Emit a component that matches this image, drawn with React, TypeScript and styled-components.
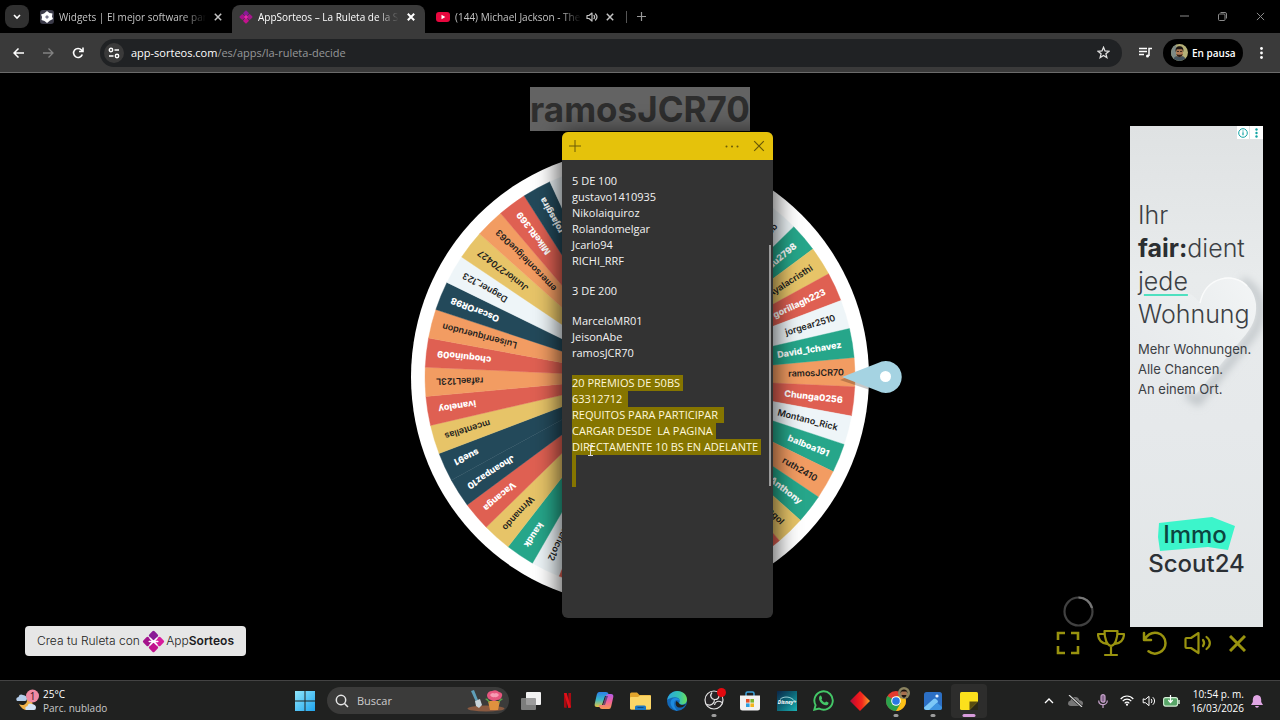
import React from "react";
import styled, { createGlobalStyle, css } from "styled-components";

const UI = `"Open Sans", "Noto Sans", sans-serif`;
const WEB = `Inter, "Liberation Sans", sans-serif`;

const Global = createGlobalStyle`
  *, *::before, *::after { box-sizing: border-box; }
  body { margin: 0; background: #000; font-family: ${UI}; font-size: 11px; color: #fff; }
  button { font: inherit; color: inherit; background: none; border: 0; padding: 0; cursor: pointer; }
  input { font: inherit; color: inherit; background: none; border: 0; padding: 0; min-width: 0; outline: 0; }
  a { color: inherit; text-decoration: none; }
  h1, h2, p { margin: 0; font-weight: inherit; font-size: inherit; }
  svg { display: block; flex: none; }
`;

const Screen = styled.div`
  display: flex;
  flex-direction: column;
  min-height: 100vh;
`;

/* ---------- browser chrome ---------- */

const TabStrip = styled.header`
  display: flex;
  align-items: stretch;
  height: 33px;
  padding: 0 5px;
  background: #000;
`;

const TabSearch = styled.button`
  display: grid;
  place-items: center;
  align-self: center;
  width: 24px;
  height: 23px;
  margin-right: 6px;
  border-radius: 8px;
  background: #303030;
`;

const Tab = styled.div<{ $active?: boolean; $width: number; $indent: number }>`
  position: relative;
  display: flex;
  align-items: center;
  width: ${(p) => p.$width}px;
  margin-top: 5px;
  padding: 0 7px 5px ${(p) => p.$indent}px;
  gap: 5px;
  color: ${(p) => (p.$active ? "#fff" : "#c4c4c4")};
  ${(p) =>
    p.$active &&
    css`
      background: #3a3a3a;
      border-radius: 8px 8px 0 0;
    `}
`;

const TabTitle = styled.span`
  flex: 1;
  min-width: 0;
  overflow: hidden;
  white-space: nowrap;
  font-size: 10px;
  line-height: 16px;
  mask-image: linear-gradient(to right, #000 84%, transparent);
`;

const IconButton = styled.button<{ $size?: number; $dim?: boolean }>`
  display: grid;
  place-items: center;
  flex: none;
  width: ${(p) => p.$size ?? 14}px;
  height: ${(p) => p.$size ?? 14}px;
  color: ${(p) => (p.$dim ? "#828282" : "inherit")};
`;

const TabDivider = styled.span`
  align-self: center;
  width: 1px;
  height: 12px;
  margin: 0 7px 0 2px;
  background: #555;
`;

const NewTab = styled(IconButton)`
  align-self: center;
  color: #999;
`;

const WindowButtons = styled.div`
  display: flex;
  align-items: center;
  gap: 24px;
  margin-left: auto;
  padding-right: 8px;
  color: #8a8a8a;
`;

const Toolbar = styled.nav`
  display: flex;
  align-items: center;
  height: 40px;
  padding: 0 12px 0 8px;
  background: #3a3a3a;
  border-bottom: 1px solid #6b6b6b;
`;

const NavButtons = styled.div`
  display: flex;
  gap: 10px;
  margin-right: 12px;
`;

const AddressBar = styled.form`
  display: flex;
  align-items: center;
  flex: 1;
  height: 28px;
  padding: 0 12px 0 4px;
  border-radius: 14px;
  background: #202224;
  line-height: 18px;
`;

const SiteInfo = styled.button`
  display: grid;
  place-items: center;
  width: 20px;
  height: 20px;
  margin-right: 7px;
  border-radius: 50%;
  background: #3a3a3a;
`;

const PathInput = styled.input`
  flex: 1;
  color: #969899;
`;

const MediaButton = styled(IconButton)`
  margin: 0 8px 0 13px;
`;

const Profile = styled.button`
  display: flex;
  align-items: center;
  gap: 4px;
  height: 28px;
  width: 80px;
  margin-right: 11px;
  padding: 0 8px;
  border-radius: 14px;
  background: #000;
  font-size: 10px;
  font-weight: 600;
  white-space: nowrap;
`;

/* ---------- page ---------- */

const Stage = styled.main`
  position: relative;
  display: grid;
  grid-template-columns: 1fr auto 1fr;
  flex: 1;
  font-family: ${WEB};
`;

const LeftSide = styled.div`
  display: flex;
  align-items: flex-end;
  padding: 0 0 24px 25px;
`;

const Credit = styled.a`
  display: flex;
  align-items: center;
  width: 221px;
  height: 30px;
  padding: 0 12px;
  justify-content: space-between;
  border-radius: 4px;
  background: #e6e6e6;
  color: #1c1c22;
  font-size: 12px;
  font-weight: 300;
  line-height: 16px;
  white-space: nowrap;
  b { font-weight: 600; }
`;

const Center = styled.section`
  display: flex;
  flex-direction: column;
  align-items: center;
  gap: 17px;
  padding-top: 14px;
`;

const Winner = styled.h1`
  && {
    font-size: 35px;
    font-weight: 700;
  }
  line-height: 44px;
  background: #636363;
  color: #2e2e2e;
`;

const RightSide = styled.aside`
  display: flex;
  flex-direction: column;
  align-items: flex-end;
  padding: 53px 17px 20px 0;
`;

const AdRow = styled.div`
  display: flex;
  align-items: flex-end;
  gap: 36px;
`;

const Ad = styled.a`
  position: relative;
  display: flex;
  flex-direction: column;
  width: 133px;
  height: 501px;
  padding: 73px 0 0 8px;
  background: linear-gradient(#dfe2e3, #e8ebec 30%, #e6e9eb 60%, #e2e6e7);
  color: #3c4044;
  white-space: nowrap;
`;

const AdArt = styled.svg`
  position: absolute;
  left: 0;
  top: 130px;
`;

const AdChoices = styled.span`
  position: absolute;
  right: 0;
  top: 0;
  display: flex;
  gap: 1px;
`;

const AdHeadline = styled.p`
  && {
    font-size: 25px;
    font-weight: 300;
  }
  position: relative;
  line-height: 33px;
  b { font-weight: 700; color: #2b2e31; }
  u { text-decoration-color: #4fe0c0; text-decoration-thickness: 2px; text-underline-offset: 4px; text-decoration-skip-ink: none; }
`;

const AdText = styled.p`
  && { font-size: 13px; }
  position: relative;
  margin-top: 8px;
  line-height: 20px;
`;

const AdLogo = styled.div`
  position: relative;
  margin: 121px 0 0 7px;
  width: 103px;
  font-size: 24px;
  font-weight: 500;
  line-height: 29px;
  text-align: center;
  color: #2b3035;
`;

const LogoShape = styled.svg`
  position: absolute;
  left: 13px;
  top: -3px;
`;

const LogoWord = styled.span<{ $inset?: boolean }>`
  position: relative;
  display: block;
  padding-right: ${(p) => (p.$inset ? 3 : 0)}px;
  color: ${(p) => (p.$inset ? "#0c4540" : "inherit")};
`;

const Controls = styled.div`
  display: flex;
  align-items: center;
  gap: 17px;
  padding: 2px 17px 0 0;
  color: #99930f;
`;

const ControlButton = styled.button`
  display: block;
`;

/* ---------- sticky note ---------- */

const Note = styled.section`
  position: absolute;
  left: calc(50% - 78px);
  top: 59px;
  width: 211px;
  height: 486px;
  border-radius: 6px;
  overflow: hidden;
  background: #333;
  font-family: ${UI};
`;

const NoteShadow = styled.div`
  position: absolute;
  left: calc(50% - 78px);
  top: 59px;
  width: 211px;
  height: 486px;
  border-radius: 6px;
  box-shadow: 0 4px 24px 3px rgba(0, 0, 0, 0.7);
`;

const NoteBar = styled.div`
  display: flex;
  align-items: center;
  gap: 13px;
  height: 28px;
  padding: 0 7px 0 6px;
  background: #e5c20b;
  color: #6a5a08;
`;

const Spacer = styled.span`
  flex: 1;
`;

const NoteBody = styled.div`
  display: flex;
  flex-direction: column;
  gap: 14px;
  padding: 13px 0 0 10px;
  line-height: 16px;
  color: #f2f2f2;
  white-space: pre;
`;

const NoteLine = styled.div`
  height: 16px;
`;

const Marked = styled.mark`
  display: inline-block;
  height: 16px;
  min-width: 4px;
  padding-right: 3px;
  background: #857500;
  color: #fff8dc;
`;

const NoteScroll = styled.span`
  position: absolute;
  right: 2px;
  top: 113px;
  width: 2px;
  height: 241px;
  background: #9b9b9b;
`;

const Caret = styled.svg`
  position: absolute;
  left: 25px;
  top: 313px;
`;

/* ---------- taskbar ---------- */

const Taskbar = styled.footer`
  display: grid;
  grid-template-columns: 1fr 700px 1fr;
  align-items: center;
  height: 40px;
  padding: 0 17px 0 11px;
  background: #202120;
  border-top: 1px solid #434343;
`;

const Weather = styled.button`
  display: flex;
  align-items: center;
  gap: 4px;
  padding-left: 5px;
  font-size: 10px;
  line-height: 14px;
  text-align: left;
  small { display: block; font-size: 10px; color: #c8c8c8; }
`;

const Dock = styled.div`
  display: flex;
  align-items: center;
  gap: 4px;
`;

const SearchBox = styled.label`
  display: flex;
  align-items: center;
  gap: 8px;
  width: 182px;
  height: 27px;
  padding: 0 4px 0 8px;
  border-radius: 14px;
  background: #3b3b3a;
  color: #ccc;
  input { flex: 1; }
`;

const Apps = styled.div`
  display: flex;
  flex: 1;
  justify-content: space-between;
`;

const AppButton = styled.button<{ $open?: boolean; $current?: boolean }>`
  position: relative;
  display: grid;
  place-items: center;
  width: 36px;
  height: 34px;
  border-radius: 4px;
  background: ${(p) => (p.$current ? "#2d2d2c" : "none")};
  &::after {
    content: "";
    position: absolute;
    bottom: 1px;
    left: 50%;
    width: ${(p) => (p.$current ? 13 : 5)}px;
    height: 3px;
    border-radius: 2px;
    transform: translateX(-50%);
    background: ${(p) => (p.$current ? "#d79bdc" : p.$open ? "#9c9c9c" : "transparent")};
  }
`;

const Tray = styled.div`
  display: flex;
  align-items: center;
  justify-content: flex-end;
`;

const TrayButton = styled.button<{ $wide?: boolean }>`
  display: grid;
  place-items: center;
  width: ${(p) => (p.$wide ? 27 : 22)}px;
  height: 24px;
`;

const Clock = styled.time`
  width: 62px;
  margin-right: 7px;
  font-size: 10px;
  line-height: 14px;
  text-align: right;
  white-space: nowrap;
`;

/* ---------- icons ---------- */

const Cross = ({ size = 8, w = 1.5 }: { size?: number; w?: number }) => (
  <svg width={size} height={size} viewBox="0 0 10 10" fill="none" stroke="currentColor" strokeWidth={w * (10 / size)}>
    <path d="M1 1l8 8M9 1l-8 8" />
  </svg>
);

const Diamond = ({ size, plain }: { size: number; plain?: boolean }) => (
  <svg width={size} height={size} viewBox="-12 -12 24 24">
    <g transform="rotate(45)">
      <rect x="-8.3" y="-8.3" width="7.8" height="7.8" rx="1.6" fill="#8a1a96" />
      <rect x="0.5" y="-8.3" width="7.8" height="7.8" rx="1.6" fill={plain ? "#a3188c" : "#d81b9b"} />
      <rect x="-8.3" y="0.5" width="7.8" height="7.8" rx="1.6" fill="#a5128c" />
      <rect x="0.5" y="0.5" width="7.8" height="7.8" rx="1.6" fill="#c2128d" />
    </g>
    {!plain && <path d="M-3.500-3.500L3.500 3.500M3.500-3.500L-3.500 3.500M-4.500 0H4.500" stroke="#fff" strokeWidth="1.500" strokeLinecap="round" />}
    {plain && <circle r="3" fill="#e42aa8" />}
  </svg>
);

const Avatar = ({ size }: { size: number }) => (
  <svg width={size} height={size} viewBox="0 0 16 16">
    <clipPath id={`av${size}`}><circle cx="8" cy="8" r="8" /></clipPath>
    <g clipPath={`url(#av${size})`}>
      <rect width="16" height="16" fill="#b5b077" />
      <rect width="5" height="16" fill="#7d8a86" />
      <path d="M2 16c0-4 3-5 6-5s6 1 6 5z" fill="#43525c" />
      <ellipse cx="8" cy="8" rx="3.200" ry="4.300" fill="#b07a55" />
      <path d="M4.500 7.500C3.600 3 6 2 8 2s4.400 1 3.500 5.500L10.500 5h-5z" fill="#1c1512" />
      <path d="M5 9.500c.8 3.600 5.200 3.600 6 0l-1.500.6h-3z" fill="#2a1c16" />
      <path d="M5.500 7h2M8.500 7h2" stroke="#1c1512" strokeWidth=".8" />
    </g>
  </svg>
);

const Speaker = ({ size, w = 1.5 }: { size: number; w?: number }) => (
  <svg width={size} height={size} viewBox="0 0 24 24" fill="none" stroke="currentColor" strokeWidth={(w * 24) / size} strokeLinecap="round" strokeLinejoin="round">
    <path d="M2 9v6h4l6 5V4L6 9zM16 9c1.500 1.800 1.500 4.200 0 6M19 6c3.500 3.500 3.500 8.500 0 12" />
  </svg>
);

const apps: { name: string; open?: boolean; current?: boolean; icon: React.ReactNode }[] = [
  {
    name: "Vista de tareas",
    icon: (
      <svg width="22" height="20" viewBox="0 0 22 20">
        <rect x="6" y="1" width="15" height="13" rx="1" fill="#f1f1f1" />
        <rect x="1" y="7" width="15" height="12" rx="1" fill="#8d8d8d" fillOpacity=".85" />
      </svg>
    ),
  },
  {
    name: "Netflix",
    icon: (
      <svg width="9" height="15" viewBox="0 0 10 17">
        <path d="M1 0h3v17l-3-.5zM6 0h3v16.500L6 17z" fill="#a90b12" />
        <path d="M1 0h3l5 16.500L6 17z" fill="#e01019" />
      </svg>
    ),
  },
  {
    name: "Copilot",
    icon: (
      <svg width="20" height="19" viewBox="0 0 20 19">
        <defs>
          <linearGradient id="cpA" x1="0" y1="0" x2="0" y2="1"><stop offset="0" stopColor="#2b7fe8" /><stop offset=".5" stopColor="#39b6c8" /><stop offset="1" stopColor="#e8c640" /></linearGradient>
          <linearGradient id="cpB" x1="0" y1="0" x2="0" y2="1"><stop offset="0" stopColor="#b45be8" /><stop offset=".5" stopColor="#f0629a" /><stop offset="1" stopColor="#f59a52" /></linearGradient>
        </defs>
        <path d="M5 1h7q2 0 2.600 2l.6 2H11L8 14q-.6 2-2.600 2H3Q0 16 .8 12.500l2-9Q3.400 1 5 1z" fill="url(#cpA)" />
        <path d="M15 18H8q-2 0-2.600-2L4.800 14H9l3-9q.6-2 2.600-2H17q3 0 2.200 3.500l-2 9Q16.600 18 15 18z" fill="url(#cpB)" />
        <path d="M9 14l3-9h2l-3 9z" fill="#20315f" fillOpacity=".6" />
      </svg>
    ),
  },
  {
    name: "Explorador de archivos",
    icon: (
      <svg width="21" height="18" viewBox="0 0 21 18">
        <path d="M0 2q0-1.500 1.500-1.500H7l2.500 2.500H20q1 0 1 1V16q0 1.500-1.500 1.500h-18Q0 17.500 0 16z" fill="#e2a52c" />
        <path d="M0 6q0-1 1-1h7l2-1.500h10q1 0 1 1V16q0 1.500-1.500 1.500h-18Q0 17.500 0 16z" fill="#fbd667" />
        <path d="M5 18v-3q0-1.500 1.500-1.500h8Q16 13.500 16 15v3z" fill="#1b77c4" />
        <path d="M7.500 15.500h6" stroke="#0d4d86" />
      </svg>
    ),
  },
  {
    name: "Microsoft Edge",
    icon: (
      <svg width="20" height="20" viewBox="0 0 20 20">
        <defs>
          <linearGradient id="edA" x1="0" y1="0" x2="1" y2="0"><stop offset="0" stopColor="#2aa6e0" /><stop offset=".6" stopColor="#35c3b0" /><stop offset="1" stopColor="#6be05a" /></linearGradient>
        </defs>
        <circle cx="10" cy="10" r="10" fill="#1367b5" />
        <path d="M.2 9C1 3.500 5.500 0 10.300 0 16 0 20 4 20 8.500c0 3-2.300 5-5 5-2.200 0-3.200-.8-3-1.500.8-1 1-1.700.8-2.700C12.300 7.500 10.500 6.300 8 6.300 4.500 6.300 1.500 8 .2 9z" fill="url(#edA)" />
        <path d="M8 7C4 7 3 11 4 14s4 5.500 6.500 6C8 17.500 6.500 14 7.300 11.500 7.600 10 8.500 9 9.800 9 12 9 12.700 10 12.500 11c1-2-1-4-4.500-4z" fill="#1d8ae0" />
        <path d="M12.200 12.200c.3 2 4.300 2.300 6.300.8.600 1-3 4-6.500 3.500S8 12 9.500 10z" fill="#202120" />
      </svg>
    ),
  },
  {
    name: "OBS Studio",
    open: true,
    icon: (
      <svg width="24" height="24" viewBox="0 2 24 24" overflow="visible">
        <circle cx="12" cy="13" r="9" fill="#262426" stroke="#e4e4e4" strokeWidth="1.200" />
        <path d="M10 5.500c-2.500 3-1 6.500 2.500 7M20 15.500c-3.500-2.500-7-1-7.500 2.500M5 17.500c3.500 1.500 7.500-.5 7.500-5M12.500 12.500c3 .2 4.500-1.500 4.500-4" fill="none" stroke="#e4e4e4" strokeWidth="1.200" />
        <circle cx="19.500" cy="5.500" r="4.500" fill="#e3090f" />
      </svg>
    ),
  },
  {
    name: "Microsoft Store",
    icon: (
      <svg width="20" height="20" viewBox="0 0 20 20">
        <path d="M6 5V2.500Q6 1 7.500 1h5Q14 1 14 2.500V5" fill="none" stroke="#3ba3dd" strokeWidth="1.500" />
        <path d="M0 4.500h20V17q0 2.500-2.500 2.500h-15Q0 19.500 0 17z" fill="#f2f2f2" />
        <path d="M6 8h3.600v3.600H6z" fill="#e4502b" /><path d="M10.400 8H14v3.600h-3.600z" fill="#7db52d" />
        <path d="M6 12.400h3.600V16H6z" fill="#2b9fe0" /><path d="M10.400 12.400H14V16h-3.600z" fill="#f3b41b" />
      </svg>
    ),
  },
  {
    name: "Disney+",
    icon: (
      <svg width="20" height="20" viewBox="0 0 20 20">
        <defs><linearGradient id="dis" x1="0" y1="0" x2="1" y2="1"><stop offset="0" stopColor="#0b2648" /><stop offset=".5" stopColor="#0d6878" /><stop offset="1" stopColor="#1bb2b4" /></linearGradient></defs>
        <rect width="20" height="20" fill="url(#dis)" />
        <path d="M3 8.500C6 5 14 5 17.500 10" fill="none" stroke="#bfeef0" strokeWidth=".8" />
        <text x="10" y="13" textAnchor="middle" fontSize="5" fontWeight="700" fontStyle="italic" fontFamily="Open Sans, sans-serif" fill="#fff">Disney+</text>
      </svg>
    ),
  },
  {
    name: "WhatsApp",
    icon: (
      <svg width="21" height="21" viewBox="0 0 21 21">
        <path d="M1.300 19.700l1.300-4.600A9.200 9.200 0 1 1 6 18.500z" fill="none" stroke="#44c767" strokeWidth="1.900" />
        <path d="M6.500 6.200c.6-.9 1.500-.8 1.800-.1l.8 1.800c.2.500-.8 1.300-.6 1.700.8 1.500 1.700 2.300 3.200 3 .5.200 1.100-1.200 1.600-1l2 1c.5.300.2 1.500-.5 2.100-2 1.500-5 0-6.800-1.900C6.200 11 5.400 8 6.500 6.200z" fill="#44c767" />
      </svg>
    ),
  },
  {
    name: "Juego",
    icon: (
      <svg width="20" height="20" viewBox="0 0 20 20">
        <defs><linearGradient id="rd"><stop offset="0" stopColor="#a90e3c" /><stop offset=".35" stopColor="#e8131f" /><stop offset=".6" stopColor="#f2281c" /><stop offset="1" stopColor="#f5a32b" /></linearGradient></defs>
        <path d="M10 0l10 10-10 10L0 10z" fill="url(#rd)" />
      </svg>
    ),
  },
  {
    name: "Google Chrome",
    open: true,
    icon: (
      <svg width="26" height="24" viewBox="-2 2 26 24" overflow="visible">
        <g transform="translate(11 14)">
          <circle r="10" fill="#e33b2e" />
          <path d="M0 0L-8.660-5A10 10 0 0 0 0 10L5 2.500z" fill="#2ba24c" />
          <path d="M0 10A10 10 0 0 0 8.660-5H0L4.500 2.500z" fill="#fbc116" />
          <circle r="4.800" fill="#fff" /><circle r="3.800" fill="#2a78e4" />
        </g>
        <circle cx="19" cy="6" r="6" fill="#8b8360" />
        <ellipse cx="19" cy="6.500" rx="2.700" ry="3.700" fill="#a8704e" />
        <path d="M15.500 6.500C15 1 23 1 22.500 6.500L21.500 4.500h-5zM16.500 8c1 3.500 4 3.500 5 0z" fill="#1a1310" />
      </svg>
    ),
  },
  {
    name: "Fotos",
    open: true,
    icon: (
      <svg width="18" height="18" viewBox="0 0 18 18">
        <rect width="18" height="18" rx="2.500" fill="#2c6fc4" />
        <path d="M0 15.500L9.500 7q1.500-1 2.500 0l1.500 1.500q1 1 0 2L6 18H2.500Q0 18 0 15.500z" fill="#7cc8f7" />
        <path d="M5 18l7-6.500q1-1 2 0l4 3.500v.5q0 2.500-2.500 2.500z" fill="#3e94e0" />
        <circle cx="13" cy="4" r="1.600" fill="#eaf4ff" />
      </svg>
    ),
  },
  {
    name: "Notas rápidas",
    open: true,
    current: true,
    icon: (
      <svg width="18" height="18" viewBox="0 0 18 18">
        <path d="M0 1.500Q0 0 1.500 0h15Q18 0 18 1.500V18H1.500Q0 18 0 16.500z" fill="#fbe01c" />
        <path d="M9.500 18V9.500H18z" fill="#5a4d10" /><path d="M18 9.500V18H9.500z" fill="#2a2718" />
      </svg>
    ),
  },
];

/* ---------- wheel ---------- */

const DARK = "#23495a";
const GREEN = "#26a68a";
const YELLOW = "#e7c468";
const ORANGE = "#f29c62";
const RED = "#df6052";
const PALE = "#eef5f8";

const slices: [string, string][] = [
  ["ramosJCR70", ORANGE], ["Chunga0256", RED], ["Montano_Rick", PALE], ["balboa191", GREEN],
  ["ruth2410", ORANGE], ["JAnthony", GREEN], ["Mongol", YELLOW], ["", RED],
  ["", PALE], ["", GREEN], ["", ORANGE], ["", YELLOW], ["", DARK], ["", GREEN],
  ["", RED], ["Federico12", PALE], ["kaudk", GREEN], ["Wrmando", YELLOW],
  ["Vacanga", RED], ["Jhoanpaz10", DARK], ["sue91", DARK], ["mcentellas", YELLOW],
  ["ivaneloy", RED], ["rafaeL123L", ORANGE], ["choquiño09", RED], ["Luisenriquerudon", ORANGE],
  ["OscarOR98", DARK], ["Dagner_123", PALE], ["Junior270427", YELLOW], ["emersonleigue063", ORANGE],
  ["MikeRL369", RED], ["rojasgira", DARK], ["", PALE], ["", GREEN], ["", YELLOW],
  ["", RED], ["", ORANGE], ["", DARK], ["", GREEN], ["", YELLOW],
  ["Jacob", PALE], ["Edu2798", GREEN], ["Ayalacristhi", YELLOW], ["gorillagh223", RED],
  ["jorgear2510", PALE], ["David_1chavez", GREEN],
];

const STEP = 360 / slices.length;
const FIRST = -5.2;
const R = 215;
const at = (deg: number) => {
  const a = (deg * Math.PI) / 180;
  return `${(R * Math.cos(a)).toFixed(2)} ${(R * Math.sin(a)).toFixed(2)}`;
};

const WheelSvg = styled.svg`
  overflow: visible;
`;

const Wheel = () => (
  <WheelSvg width="458" height="458" viewBox="-229 -229 458 458" role="img" aria-label="Ruleta">
    <circle r="229" fill="#fff" />
    {slices.map(([name, color], i) => {
      const a = FIRST + i * STEP;
      const light = color === RED || color === GREEN || color === DARK;
      return (
        <g key={i}>
          <path d={`M0 0L${at(a)}A${R} ${R} 0 0 1 ${at(a + STEP)}Z`} fill={color} stroke={color} strokeWidth=".4" />
          {name && (
            <text
              x="204"
              y="3"
              textAnchor="end"
              transform={`rotate(${a + STEP / 2})`}
              fontFamily="Inter, sans-serif"
              fontSize="9"
              fontWeight={light ? 800 : 600}
              fill={light ? "#fff" : "#1d1d1d"}
            >
              {name}
            </text>
          )}
        </g>
      );
    })}
    <path d="M200 3L236-12C248-18 259-8 259 2C259 14 246 20 236 15Z" fill="#000" fillOpacity=".22" />
    <path d="M202 0L238-14A16 16 0 1 1 238 14Z" fill="#a5d3e2" />
    <circle cx="245.500" cy="-.5" r="5.500" fill="#fff" />
  </WheelSvg>
);

const noteGroups = [
  ["5 DE 100", "gustavo1410935", "Nikolaiquiroz", "Rolandomelgar", "Jcarlo94", "RICHI_RRF"],
  ["3 DE 200"],
  ["MarceloMR01", "JeisonAbe", "ramosJCR70"],
];
const marked = ["20 PREMIOS DE 50BS", "63312712 ", "REQUITOS PARA PARTICIPAR ", "CARGAR DESDE  LA PAGINA", "DIRECTAMENTE 10 BS EN ADELANTE", "", ""];

export default function App() {
  return (
    <Screen>
      <Global />
      <TabStrip>
        <TabSearch aria-label="Buscar pestañas">
          <svg width="8" height="6" viewBox="0 0 8 6" fill="none" stroke="#fff" strokeWidth="1.600"><path d="M1 1l3 3 3-3" /></svg>
        </TabSearch>
        <Tab $width={197} $indent={5}>
          <svg width="14" height="14" viewBox="0 0 14 14">
            <rect width="14" height="14" rx="3" fill="#3a3a48" />
            <path d="M7 1l2.500 2 3 .5-.5 3L13 9l-3 1.500L7 13l-2.500-2L1.500 10 2 7 1 4.500l3-1z" fill="#fff" />
            <path d="M5 7l2-2 2 2-2 2z" fill="#7c7c90" />
          </svg>
          <TabTitle>Widgets | El mejor software par</TabTitle>
          <IconButton aria-label="Cerrar pestaña"  $size={14}><Cross /></IconButton>
        </Tab>
        <Tab $active $width={193} $indent={7}>
          <Diamond size={14} plain />
          <TabTitle>AppSorteos – La Ruleta de la Su</TabTitle>
          <IconButton aria-label="Cerrar pestaña"><Cross w={2} /></IconButton>
        </Tab>
        <Tab $width={199} $indent={11}>
          <svg width="14" height="10" viewBox="0 0 14 10"><rect width="14" height="10" rx="3" fill="#e8073e" /><path d="M5.500 2.800v4.400L9.300 5z" fill="#fff" /></svg>
          <TabTitle>(144) Michael Jackson - The</TabTitle>
          <Speaker size={12} w={1.2} />
          <IconButton aria-label="Cerrar pestaña"><Cross /></IconButton>
        </Tab>
        <TabDivider />
        <NewTab aria-label="Nueva pestaña">
          <svg width="9" height="9" viewBox="0 0 9 9" stroke="currentColor" strokeWidth="1.200"><path d="M4.500 0v9M0 4.500h9" /></svg>
        </NewTab>
        <WindowButtons>
          <IconButton aria-label="Minimizar"><svg width="9" height="9" viewBox="0 0 9 9" stroke="currentColor"><path d="M0 4h9" /></svg></IconButton>
          <IconButton aria-label="Restaurar">
            <svg width="9" height="9" viewBox="0 0 9 9" fill="none" stroke="currentColor"><rect x=".5" y="2" width="6.500" height="6.500" rx="1" /><path d="M2.500.5H7q1.500 0 1.500 1.500v4.500" /></svg>
          </IconButton>
          <IconButton aria-label="Cerrar"><Cross size={9} w={1} /></IconButton>
        </WindowButtons>
      </TabStrip>

      <Toolbar>
        <NavButtons>
          <IconButton aria-label="Atrás" $size={20}>
            <svg width="11" height="10" viewBox="0 0 11 10" fill="none" stroke="currentColor" strokeWidth="1.500"><path d="M11 5H1M5.500.5L1 5l4.500 4.500" /></svg>
          </IconButton>
          <IconButton aria-label="Adelante" $size={20} $dim>
            <svg width="11" height="10" viewBox="0 0 11 10" fill="none" stroke="currentColor" strokeWidth="1.300"><path d="M0 5h10M5.500.5L10 5 5.500 9.500" /></svg>
          </IconButton>
          <IconButton aria-label="Recargar" $size={20}>
            <svg width="12" height="12" viewBox="0 0 12 12" fill="none" stroke="currentColor" strokeWidth="1.600"><path d="M10.300 7.500A4.500 4.500 0 1 1 9.500 3L11 4.500M11 .5v4H7" /></svg>
          </IconButton>
        </NavButtons>
        <AddressBar onSubmit={(e) => e.preventDefault()}>
          <SiteInfo type="button" aria-label="Información del sitio">
            <svg width="12" height="12" viewBox="0 0 12 12" fill="none" stroke="#fff" strokeWidth="1.400"><circle cx="3" cy="3" r="1.700" /><path d="M6.500 3H11M1 9h4.500" /><circle cx="9" cy="9" r="1.700" /></svg>
          </SiteInfo>
          <label htmlFor="path">app-sorteos.com</label>
          <PathInput id="path" defaultValue="/es/apps/la-ruleta-decide" />
          <IconButton type="button" aria-label="Añadir a marcadores">
            <svg width="13" height="13" viewBox="0 0 24 24" fill="none" stroke="#e0e0e0" strokeWidth="2.400"><path d="M12 2.500l2.800 6.600 7.200.6-5.500 4.700 1.700 7-6.200-3.800-6.200 3.800 1.700-7L2 9.700l7.200-.6z" /></svg>
          </IconButton>
        </AddressBar>
        <MediaButton aria-label="Control multimedia" $size={20}>
          <svg width="13" height="11" viewBox="0 0 13 11" fill="none" stroke="#fff" strokeWidth="1.500"><path d="M0 1.500h8M0 4.500h8M0 7.500h5M10 9V1.500h3" /><circle cx="8.500" cy="9" r="1.500" fill="#fff" stroke="none" /></svg>
        </MediaButton>
        <Profile><Avatar size={17} />En pausa</Profile>
        <IconButton aria-label="Menú"><svg width="3" height="12" viewBox="0 0 3 12" fill="#fff"><circle cx="1.500" cy="1.500" r="1.400" /><circle cx="1.500" cy="6" r="1.400" /><circle cx="1.500" cy="10.500" r="1.400" /></svg></IconButton>
      </Toolbar>

      <Stage>
        <LeftSide>
          <Credit href="#app-sorteos">
            <span>Crea tu Ruleta con</span>
            <Diamond size={23} />
            <span>App<b>Sorteos</b></span>
          </Credit>
        </LeftSide>

        <Center>
          <Winner>ramosJCR70</Winner>
          <Wheel />
        </Center>

        <RightSide>
          <AdRow>
            <svg width="31" height="31" viewBox="0 0 31 31" fill="none" strokeWidth="2.200">
              <circle cx="15.500" cy="15.500" r="14" stroke="#414141" /><path d="M15.500 1.500A14 14 0 0 1 29 12" stroke="#777" />
            </svg>
            <Ad href="#anzeige">
              <AdArt width="133" height="165" viewBox="0 0 133 165">
                <defs>
                  <linearGradient id="heart" x1="0" y1=".6" x2="1" y2="0"><stop offset="0" stopColor="#e7eaec" /><stop offset=".6" stopColor="#eceff0" /><stop offset="1" stopColor="#f3f5f6" /></linearGradient>
                  <filter id="soft" x="-30%" y="-30%" width="160%" height="160%"><feGaussianBlur stdDeviation="4" /></filter>
                </defs>
                <path d="M112 24C136 38 134 66 118 84L68 146L56 138" fill="none" stroke="#b6bcc0" strokeWidth="6" filter="url(#soft)" />
                <path d="M70 47C76 12 122 14 126 48C127 62 122 72 112 83L66 138L0 104V36C20 26 56 28 70 47Z" fill="url(#heart)" />
                <path d="M70 47C76 20 104 16 117 30" fill="none" stroke="#fafbfb" strokeWidth="1.500" />
              </AdArt>
              <AdChoices>
                <svg width="12" height="13" viewBox="0 0 12 13"><rect width="12" height="13" fill="#fff" /><circle cx="6" cy="7" r="4.300" fill="none" stroke="#12a4a4" /><path d="M6 6.300v3M6 4.500v1" stroke="#12a4a4" strokeWidth="1.200" /></svg>
                <svg width="13" height="13" viewBox="0 0 13 13" fill="#12a4a4"><rect width="13" height="13" fill="#fff" /><circle cx="6.500" cy="3.500" r="1.200" /><circle cx="6.500" cy="7" r="1.200" /><circle cx="6.500" cy="10.500" r="1.200" /></svg>
              </AdChoices>
              <AdHeadline>Ihr<br /><b>fair:</b>dient<br />j<u>ede</u><br />Wohnung</AdHeadline>
              <AdText>Mehr Wohnungen.<br />Alle Chancen.<br />An einem Ort.</AdText>
              <AdLogo>
                <LogoShape width="78" height="34" viewBox="0 0 78 34"><path d="M1 6L54 0 77 9 70 33 50 30 2 34 0 20z" fill="#3cf5cb" /></LogoShape>
                <LogoWord $inset>Immo</LogoWord>
                <LogoWord>Scout24</LogoWord>
              </AdLogo>
            </Ad>
          </AdRow>
          <Controls>
            <ControlButton aria-label="Pantalla completa">
              <svg width="24" height="24" viewBox="0 0 24 24" fill="none" stroke="currentColor" strokeWidth="2.600"><path d="M2 9V2h7M15 2h7v7M22 15v7h-7M9 22H2v-7" /></svg>
            </ControlButton>
            <ControlButton aria-label="Ganadores">
              <svg width="28" height="28" viewBox="0 0 28 28" fill="none" stroke="currentColor" strokeWidth="2.200" strokeLinecap="round" strokeLinejoin="round">
                <path d="M7.500 2h13c0 7-2 14-6.500 15C9.500 16 7.500 9 7.500 2zM7.500 5H1c0 5 3 9 9 10M20.500 5H27c0 5-3 9-9 10M14 17v8M8 26h12" />
              </svg>
            </ControlButton>
            <ControlButton aria-label="Reiniciar">
              <svg width="25" height="26" viewBox="0 0 25 26" fill="none" stroke="currentColor" strokeWidth="2.500" strokeLinecap="round" strokeLinejoin="round"><path d="M2 3v7h7M2.500 9.500C6 4 11 2 15.500 3 20 4 23.500 8 23.500 13a10.500 10.500 0 0 1-17 8.300" /></svg>
            </ControlButton>
            <ControlButton aria-label="Sonido">
              <svg width="28" height="24" viewBox="0 0 28 24" fill="none" stroke="currentColor" strokeWidth="2.200" strokeLinecap="round" strokeLinejoin="round"><path d="M1.500 8v8q0 1 1 1H7l7.500 5V2L7 7H2.500q-1 0-1 1zM19 9c1.500 2 1.500 4 0 6M22.500 6c4.500 3.500 4.500 8.500 0 12" /></svg>
            </ControlButton>
            <ControlButton aria-label="Salir">
              <svg width="17" height="17" viewBox="0 0 17 17" fill="none" stroke="currentColor" strokeWidth="3"><path d="M1 1l15 15M16 1L1 16" /></svg>
            </ControlButton>
          </Controls>
        </RightSide>

        <NoteShadow />
        <Note aria-label="Nota rápida">
          <NoteBar>
            <IconButton aria-label="Nueva nota"><svg width="12" height="12" viewBox="0 0 12 12" stroke="currentColor" strokeWidth="1"><path d="M6 0v12M0 6h12" /></svg></IconButton>
            <Spacer />
            <IconButton aria-label="Menú de nota"><svg width="14" height="3" viewBox="0 0 14 3" fill="currentColor"><circle cx="1.500" cy="1.500" r="1" /><circle cx="7" cy="1.500" r="1" /><circle cx="12.500" cy="1.500" r="1" /></svg></IconButton>
            <IconButton aria-label="Cerrar nota"><Cross size={12} w={1.2} /></IconButton>
          </NoteBar>
          <NoteBody>
            {noteGroups.map((g, i) => (
              <div key={i}>{g.map((l) => <NoteLine key={l}>{l}</NoteLine>)}</div>
            ))}
            <div>{marked.map((l, i) => <NoteLine key={i}><Marked>{l}</Marked></NoteLine>)}</div>
          </NoteBody>
          <NoteScroll />
          <Caret width="7" height="11" viewBox="0 0 7 11" fill="none" stroke="#ddd"><path d="M1 .5h5M3.500.5v10M1 10.500h5" /></Caret>
        </Note>
      </Stage>

      <Taskbar>
        <Weather>
          <svg width="23" height="24" viewBox="0 0 23 24">
            <path d="M3 15c5 3 9-1 8-6 4 1 7 5 5 9s-9 5-13-3z" fill="#f0b24a" />
            <path d="M10 21q-2-3 1.500-4 1-3.500 4.500-2 4 .5 4 3.500 0 2.500-2 2.500z" fill="#d3e3f5" />
            <path d="M1 12q-2-3 1.500-4 1-3.500 4.500-2 4 .5 4 3.500 0 2.500-2 2.500z" fill="#b4cdea" />
            <circle cx="16.500" cy="7" r="6.500" fill="#ef8aa3" />
            <text x="16.500" y="11" textAnchor="middle" fontSize="10" fontFamily="Open Sans, sans-serif" fill="#301018">1</text>
          </svg>
          <span>25°C<small>Parc. nublado</small></span>
        </Weather>
        <Dock>
          <AppButton aria-label="Inicio">
            <svg width="20" height="20" viewBox="0 0 20 20"><defs><linearGradient id="win" x1="0" y1="0" x2="1" y2="1"><stop offset="0" stopColor="#8fe6fb" /><stop offset="1" stopColor="#1fa4ee" /></linearGradient></defs><path d="M0 0h9.500v9.500H0zM10.500 0H20v9.500h-9.500zM0 10.500h9.500V20H0zM10.500 10.500H20V20h-9.500z" fill="url(#win)" /></svg>
          </AppButton>
          <SearchBox>
            <svg width="14" height="14" viewBox="0 0 14 14" fill="none" stroke="#e6e6e6" strokeWidth="1.500"><circle cx="6" cy="6" r="4.700" /><path d="M9.500 9.500L13 13" /></svg>
            <input aria-label="Buscar" defaultValue="Buscar" size={8} />
            <svg width="38" height="22" viewBox="0 0 38 22">
              <ellipse cx="19" cy="18.500" rx="18.500" ry="3" fill="#8a5a40" />
              <path d="M4 1l3-1 4 10-2.500 1z" fill="#5f9fb8" /><path d="M8 11l5-2 2 6-3 3-3-2z" fill="#c9d4da" />
              <path d="M21 11h12l-2 9h-8z" fill="#e0913e" /><path d="M18 9q3-2 5 4zM36 9q-3-2-5 4z" fill="#58a04a" />
              <path d="M20 5q1-4 5-4 4-2 7 1 4 1 3 4-1 4-5 4-3 2-6 0-4-1-4-5z" fill="#e6577f" />
              <path d="M23 5q2-3 4.500-1.500Q30 2 32 5q-2 3-4.500 2Q25 8 23 5z" fill="#f79cb4" />
            </svg>
          </SearchBox>
          <Apps>
            {apps.map((a) => (
              <AppButton key={a.name} aria-label={a.name} $open={a.open} $current={a.current}>{a.icon}</AppButton>
            ))}
          </Apps>
        </Dock>
        <Tray>
          <TrayButton $wide aria-label="Iconos ocultos"><svg width="10" height="6" viewBox="0 0 10 6" fill="none" stroke="#fff" strokeWidth="1.300"><path d="M1 5l4-4 4 4" /></svg></TrayButton>
          <TrayButton $wide aria-label="OneDrive">
            <svg width="15" height="12" viewBox="0 0 15 12"><path d="M3 11Q0 11 0 8.300 0 6 2.500 5.500 3.500 2 7 2q3.500 0 4.300 3.200Q15 5.500 15 8.300 15 11 12 11z" fill="#777" /><path d="M1 0l13 12" stroke="#202120" strokeWidth="2.500" /><path d="M1 0l13 12" stroke="#ddd" strokeWidth="1.100" /></svg>
          </TrayButton>
          <TrayButton $wide aria-label="Micrófono">
            <svg width="10" height="14" viewBox="0 0 10 14" fill="none" stroke="#c7a3cc" strokeWidth="1.200"><rect x="3" y=".7" width="4" height="7.500" rx="2" fill="#8a6a90" /><path d="M.7 6.500c0 5.500 8.600 5.500 8.600 0M5 10.500V14" /></svg>
          </TrayButton>
          <TrayButton aria-label="Wi-Fi">
            <svg width="14" height="11" viewBox="0 0 14 11" fill="none" stroke="#fff" strokeWidth="1.200"><path d="M.7 4c3.500-4 9.100-4 12.600 0M2.700 6.200c2.400-2.800 6.200-2.800 8.600 0M4.700 8.300c1.300-1.500 3.300-1.500 4.600 0" /><circle cx="7" cy="9.700" r="1.100" fill="#fff" stroke="none" /></svg>
          </TrayButton>
          <TrayButton aria-label="Volumen"><Speaker size={14} w={1} /></TrayButton>
          <TrayButton aria-label="Batería">
            <svg width="17" height="12" viewBox="0 0 17 12"><rect x=".6" y="2.600" width="14" height="8.500" rx="2" fill="#58a668" stroke="#d3efd6" strokeWidth="1.100" /><path d="M16 5v4" stroke="#d3efd6" strokeWidth="1.500" /><path d="M7.500 0v7M5.300 5l2.200 2.500L9.700 5" fill="none" stroke="#fff" strokeWidth="1.200" /></svg>
          </TrayButton>
          <Clock>10:54 p. m.<br />16/03/2026</Clock>
          <IconButton aria-label="Notificaciones" $size={12}>
            <svg width="12" height="13" viewBox="0 0 12 13" fill="#e0a6e4"><path d="M6 0q4 .3 4.200 4.500V7L12 10H0l1.800-3V4.500Q2 .3 6 0zM4 11h4q-.5 1.700-2 1.700T4 11z" /></svg>
          </IconButton>
        </Tray>
      </Taskbar>
    </Screen>
  );
}
